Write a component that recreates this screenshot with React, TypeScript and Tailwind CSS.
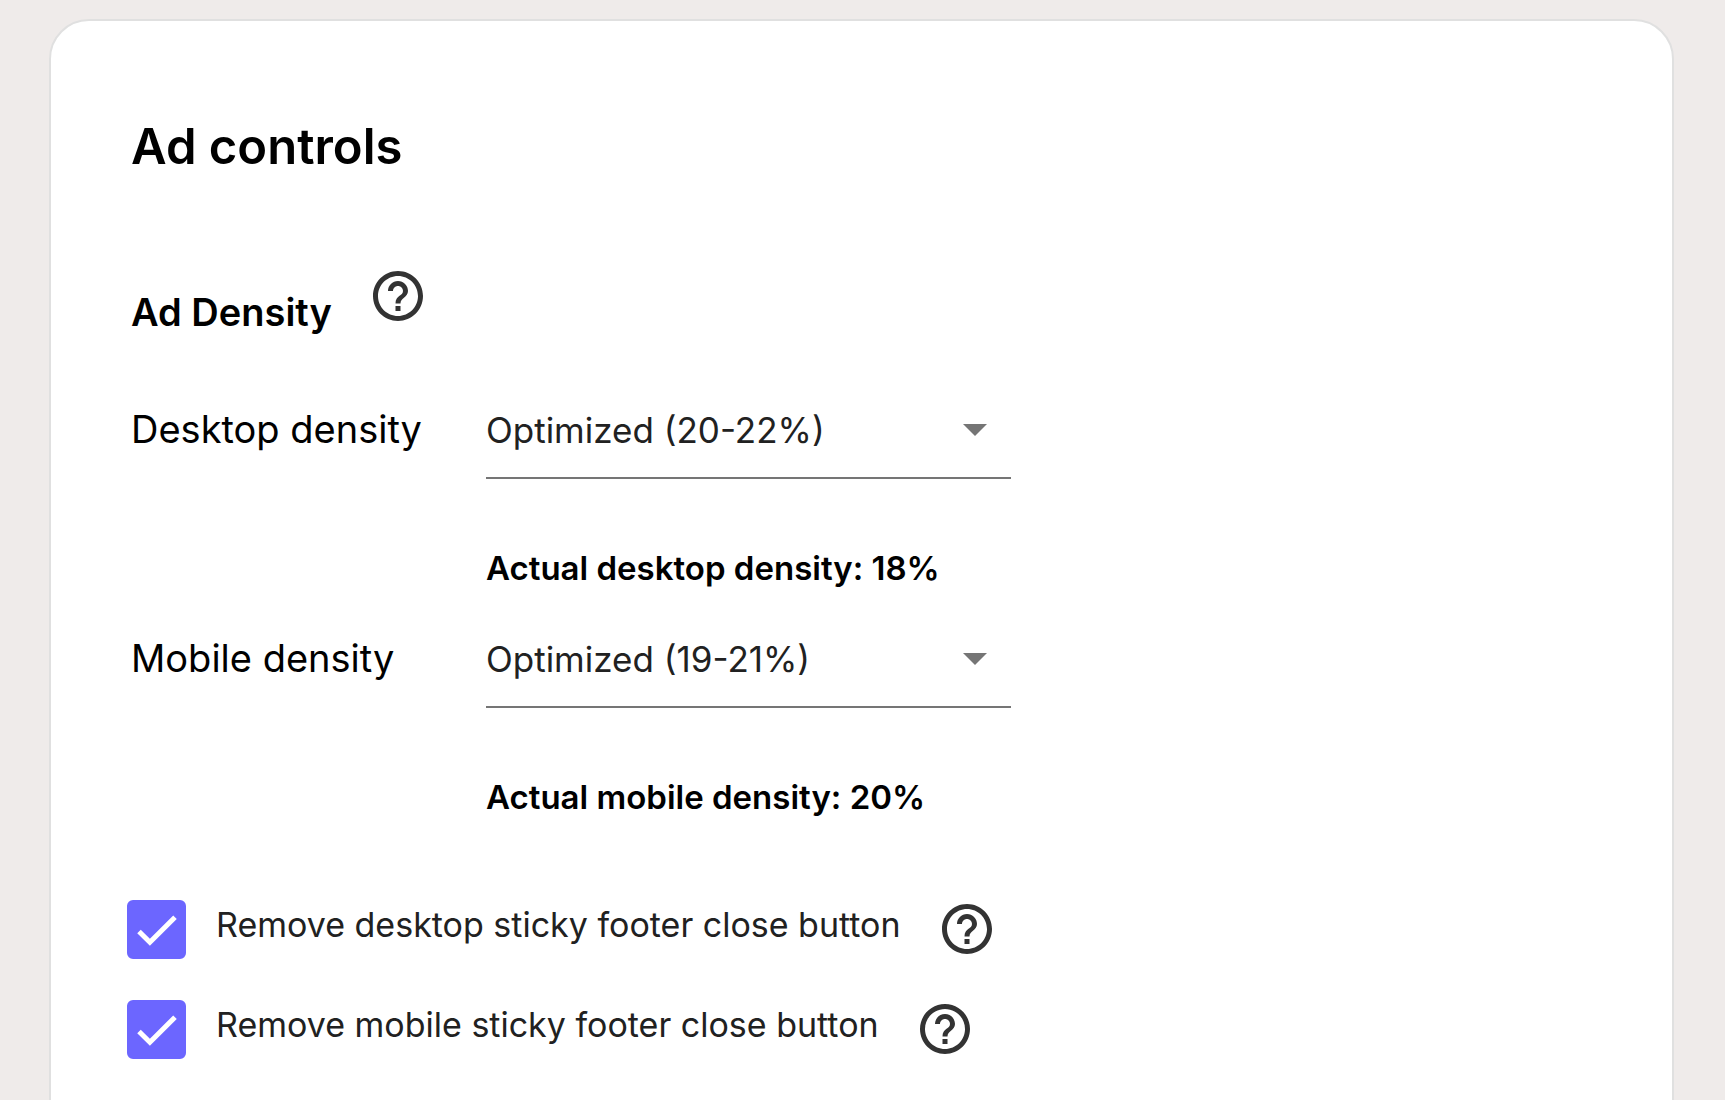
import { useState } from 'react'

const densityRows = [
  {
    id: 'desktop',
    label: 'Desktop density',
    options: ['Optimized (20-22%)'],
    actual: 'Actual desktop density: 18%',
  },
  {
    id: 'mobile',
    label: 'Mobile density',
    options: ['Optimized (19-21%)'],
    actual: 'Actual mobile density: 20%',
  },
]

const footerToggles = [
  { id: 'remove-desktop', label: 'Remove desktop sticky footer close button' },
  { id: 'remove-mobile', label: 'Remove mobile sticky footer close button' },
]

function HelpButton({ label }: { label: string }) {
  return (
    <button type="button" aria-label={label} className="size-[60px] shrink-0 text-[#333333]">
      <svg viewBox="0 0 24 24" fill="currentColor" className="size-full">
        <path d="M11 18h2v-2h-2v2zm1-16C6.48 2 2 6.48 2 12s4.48 10 10 10 10-4.48 10-10S17.52 2 12 2zm0 18c-4.41 0-8-3.59-8-8s3.59-8 8-8 8 3.59 8 8-3.59 8-8 8zm0-14c-2.21 0-4 1.79-4 4h2c0-1.1.9-2 2-2s2 .9 2 2c0 2-3 1.75-3 5h2c0-2.25 3-2.5 3-5 0-2.21-1.79-4-4-4z" />
      </svg>
    </button>
  )
}

function DensitySelect({ id, options }: { id: string; options: string[] }) {
  return (
    <div className="relative">
      <select
        id={id}
        className="block h-[76px] w-full appearance-none border-b-2 border-[#757575] bg-transparent pb-5 text-[35px] text-[#212121] outline-none"
      >
        {options.map((option) => (
          <option key={option}>{option}</option>
        ))}
      </select>
      <svg
        viewBox="0 0 24 12"
        className="pointer-events-none absolute top-[21px] right-6 h-3 w-6 fill-[#757575]"
      >
        <path d="M0 0h24L12 12z" />
      </svg>
    </div>
  )
}

function Toggle({ id, label }: { id: string; label: string }) {
  const [checked, setChecked] = useState(true)

  return (
    <div className="flex items-start">
      <span className="relative mr-[30px] -ml-1 size-[59px] shrink-0 self-end">
        <input
          id={id}
          type="checkbox"
          checked={checked}
          onChange={(e) => setChecked(e.target.checked)}
          className="block size-full appearance-none rounded-md border-2 border-[#6c66ff] checked:bg-[#6c66ff]"
        />
        {checked && (
          <svg
            viewBox="0 0 59 59"
            className="pointer-events-none absolute inset-0 fill-none stroke-white"
            strokeWidth="5"
          >
            <path d="M12 31.4l10.9 10.9L48 17.2" />
          </svg>
        )}
      </span>
      <label htmlFor={id} className="mr-9 text-[34px] leading-[52px] text-[#212121]">
        {label}
      </label>
      <HelpButton label={`About: ${label}`} />
    </div>
  )
}

export default function App() {
  return (
    <div className="min-h-screen bg-[#efebea] pt-[19px] pr-[51px] pl-[49px] font-['Inter',sans-serif] text-black">
      <main className="rounded-[40px] border-2 border-[#e0e0e0] bg-white px-20 py-24">
        <h1 className="text-[49px] leading-[60px] font-semibold">Ad controls</h1>

        <div className="mt-[89px] flex items-start gap-9">
          <h2 className="mt-[22px] text-[38px] leading-[48px] font-semibold">Ad Density</h2>
          <HelpButton label="About ad density" />
        </div>

        <div className="mt-[67px] grid grid-cols-[355px_minmax(0,525px)] gap-y-10">
          {densityRows.map((row) => (
            <div key={row.id} className="col-span-2 grid grid-cols-subgrid">
              <label htmlFor={row.id} className="text-[38px] leading-[52px]">
                {row.label}
              </label>
              <div>
                <DensitySelect id={row.id} options={row.options} />
                <p className="mt-[65px] text-[33px] leading-[48px] font-semibold">{row.actual}</p>
              </div>
            </div>
          ))}
        </div>

        <div className="mt-[78px] flex flex-col gap-10">
          {footerToggles.map((toggle) => (
            <Toggle key={toggle.id} id={toggle.id} label={toggle.label} />
          ))}
        </div>
      </main>
    </div>
  )
}
